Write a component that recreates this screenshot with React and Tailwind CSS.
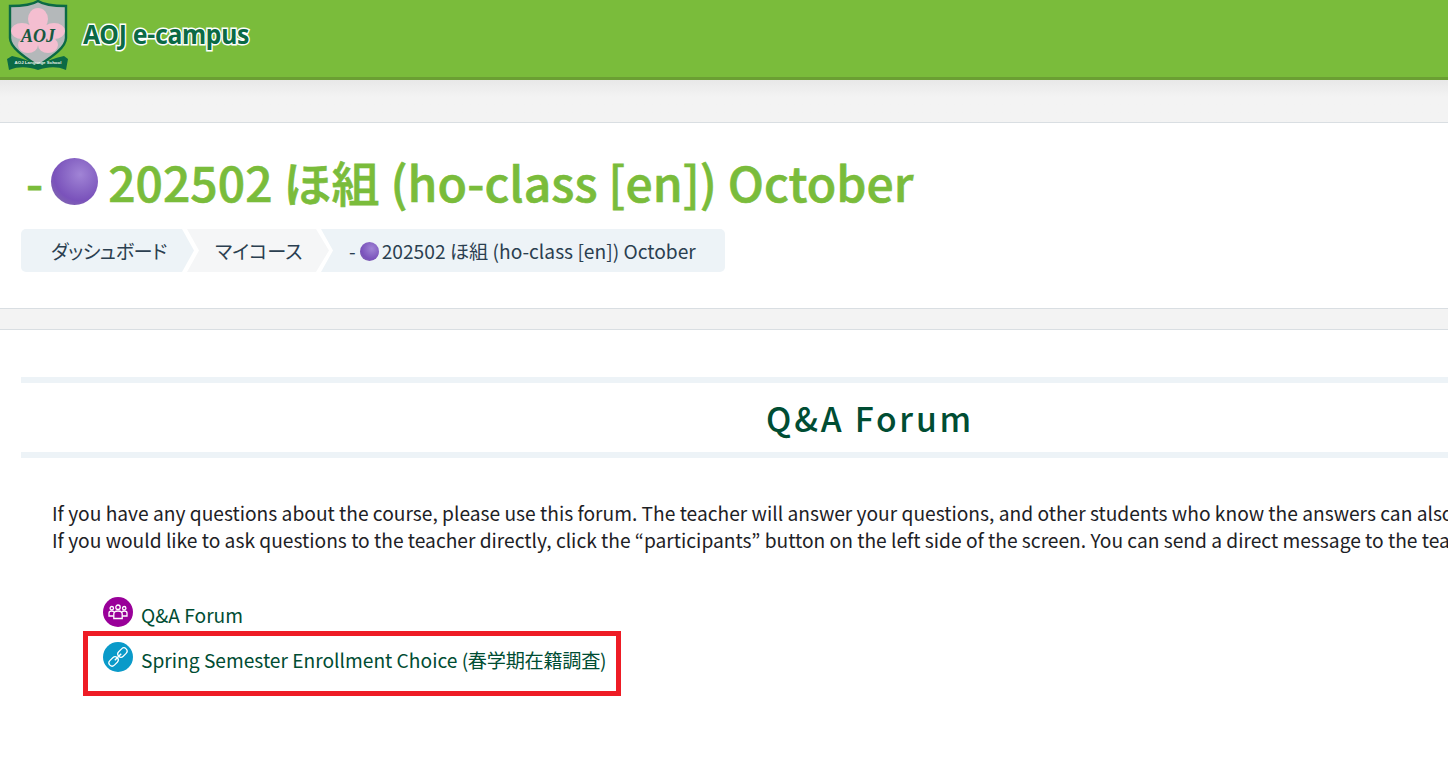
import React from 'react';

const font = { fontFamily: '"Noto Sans CJK JP", "Noto Sans", sans-serif' };

const Ball = ({ className }) => (
  <span className={`inline-block rounded-full bg-[radial-gradient(circle_at_62%_35%,#a184d6_0%,#8a68c6_35%,#7a52bb_62%,#8578a6_100%)] ${className}`} />
);

const Logo = () => (
  <svg width="64" height="72" viewBox="0 0 64 72" className="shrink-0">
    <path d="M32 1 C26 5 17 6 4 6 L4 38 C4 48 20 58 32 66 C44 58 60 48 60 38 L60 6 C47 6 38 5 32 1Z" fill="#b4b8ba" stroke="#0b6a45" strokeWidth="2.4" />
    <g fill="#f4bed0">
      <ellipse cx="32" cy="19" rx="10" ry="11" />
      <ellipse cx="16" cy="31" rx="11" ry="8" />
      <ellipse cx="48" cy="31" rx="11" ry="8" />
      <ellipse cx="22" cy="45" rx="10" ry="8" />
      <ellipse cx="42" cy="45" rx="10" ry="8" />
      <circle cx="32" cy="33" r="12" />
    </g>
    <text x="32" y="42" textAnchor="middle" fontFamily='"Liberation Serif", serif' fontStyle="italic" fontWeight="700" fontSize="18" fill="#17583f">AOJ</text>
    <path d="M1 59 L6 56 C16 58 24 62 32 64 C40 62 48 58 58 56 L62 59 L60 70 C50 66 42 67 32 70 C22 67 14 66 3 70Z" fill="#0b6a45" />
    <text x="32" y="64" textAnchor="middle" fontFamily='"Liberation Sans", sans-serif' fontSize="4.4" fontWeight="700" fill="#e7f1ea">AOJ Language School</text>
  </svg>
);

const GroupIcon = () => (
  <svg width="20" height="16" viewBox="0 0 20 16" fill="none" stroke="#fff" strokeWidth="1.3">
    <circle cx="10" cy="3.2" r="2.2" />
    <circle cx="3.8" cy="4.2" r="1.7" />
    <circle cx="16.2" cy="4.2" r="1.7" />
    <path d="M5.8 14.5 V10 C5.8 8 7.5 7 10 7 C12.5 7 14.2 8 14.2 10 V14.5 Z" />
    <path d="M5.6 12 H1 V9 C1 7.8 2.2 7 3.8 7 C4.7 7 5.4 7.2 6 7.7" />
    <path d="M14.4 12 H19 V9 C19 7.8 17.8 7 16.2 7 C15.3 7 14.6 7.2 14 7.7" />
  </svg>
);

const LinkIcon = () => (
  <svg width="24" height="24" viewBox="0 0 24 24" fill="none" stroke="#fff" strokeWidth="1.2">
    <g transform="rotate(-45 12 12)">
      <rect x="0.5" y="8.8" width="10.5" height="6.4" rx="3.2" />
      <rect x="13" y="8.8" width="10.5" height="6.4" rx="3.2" />
      <path d="M7.5 12 H16.5" strokeWidth="1.4" />
    </g>
  </svg>
);

const App = () => {
  return (
    <div className="w-[1448px] h-[761px] overflow-hidden bg-white text-[#2b3f50]" style={font}>
      <header className="h-20 bg-[#7abc3b] border-b-[3px] border-[#6b9f33] flex items-start pl-[6px] pt-0 gap-[13px]">
        <Logo />
        <span className="mt-[15px] text-[27px] leading-[38px] font-bold text-[#0b6a45] [-webkit-text-stroke:3px_#fff] [paint-order:stroke_fill] font-['Noto_Sans',sans-serif] tracking-[-0.3px] scale-x-[0.917] origin-left">
          AOJ e-campus
        </span>
      </header>

      <div className="h-[42px] bg-gradient-to-b from-[#e8e8e8] to-[#f3f3f3] from-0% to-40%" />

      <section className="h-[187px] border-y border-[#d9dee2] pl-[21px]">
        <h1 className="mt-[26px] h-[64px] flex items-center text-[48px] leading-[64px] font-medium [-webkit-text-stroke:0.7px_#7abc3b] text-[#7abc3b] whitespace-nowrap pl-[5px]">
          <span>-</span>
          <Ball className="w-[47px] h-[47px] ml-[8px] mr-[10px]" />
          <span className="tracking-[0.05px]">202502 ほ組 (ho-class [en]) October</span>
        </h1>
        <nav className="mt-[16px] flex h-[43px] text-[19.2px] whitespace-nowrap [font-feature-settings:'palt']">
          <a className="w-[173px] pl-[30px] pt-[1px] flex items-center tracking-[-0.5px] bg-[#edf3f7] rounded-l-[5px] [clip-path:polygon(0_0,161px_0,100%_50%,161px_100%,0_100%)]">ダッシュボード</a>
          <a className="w-[142px] -ml-[7px] pl-[28px] pt-[1px] flex items-center bg-[#f5f6f7] [clip-path:polygon(0_0,129px_0,100%_50%,129px_100%,0_100%,12px_50%)]">マイコース</a>
          <a className="w-[404px] -ml-[8px] pl-[28px] pt-[1px] flex items-center bg-[#edf3f7] rounded-r-[5px] [clip-path:polygon(0_0,100%_0,100%_100%,0_100%,12px_50%)]">
            <span>-</span>
            <Ball className="w-[19px] h-[19px] ml-[4px] mr-[3px]" />
            <span>202502 ほ組 (ho-class [en]) October</span>
          </a>
        </nav>
      </section>

      <div className="h-[20px] bg-[#f3f3f3]" />

      <main className="border-t border-[#d9dee2] pl-[21px] pt-[47px]">
        <h2 className="w-[1698px] h-[81px] pt-[2px] border-y-[6px] border-[#edf3f7] flex items-center justify-center text-[33.6px] font-medium tracking-[2.8px] text-[#004d33]">
          Q&amp;A Forum
        </h2>

        <div className="mt-[42px] pl-[31px] text-[19.2px] leading-[27px] text-[#1d2125] whitespace-nowrap">
          <p>If you have any questions about the course, please use this forum. The teacher will answer your questions, and other students who know the answers can also answer.</p>
          <p>If you would like to ask questions to the teacher directly, click the “participants” button on the left side of the screen. You can send a direct message to the teacher.</p>
        </div>

        <ul className="mt-[43px] ml-[62px] w-[538px] text-[19.2px] text-[#004d33] whitespace-nowrap [font-feature-settings:'palt']">
          <li className="h-[30px] pl-[20px] flex items-center gap-[8px]">
            <span className="w-[30px] h-[30px] rounded-full bg-[#990099] flex items-center justify-center"><GroupIcon /></span>
            <a className="mt-[6px]">Q&amp;A Forum</a>
          </li>
          <li className="relative mt-[15px] h-[30px] pl-[20px] flex items-center gap-[8px]">
            <span className="w-[30px] h-[30px] rounded-full bg-[#0a9ac9] flex items-center justify-center"><LinkIcon /></span>
            <a className="mt-[6px]">Spring Semester Enrollment Choice <span className="tracking-[-0.3px]">(春学期在籍調査)</span></a>
            <span className="absolute left-0 -top-[11px] w-[538px] h-[65px] border-[5px] border-[#ee1c25]" />
          </li>
        </ul>
      </main>
    </div>
  );
};

export default App;
